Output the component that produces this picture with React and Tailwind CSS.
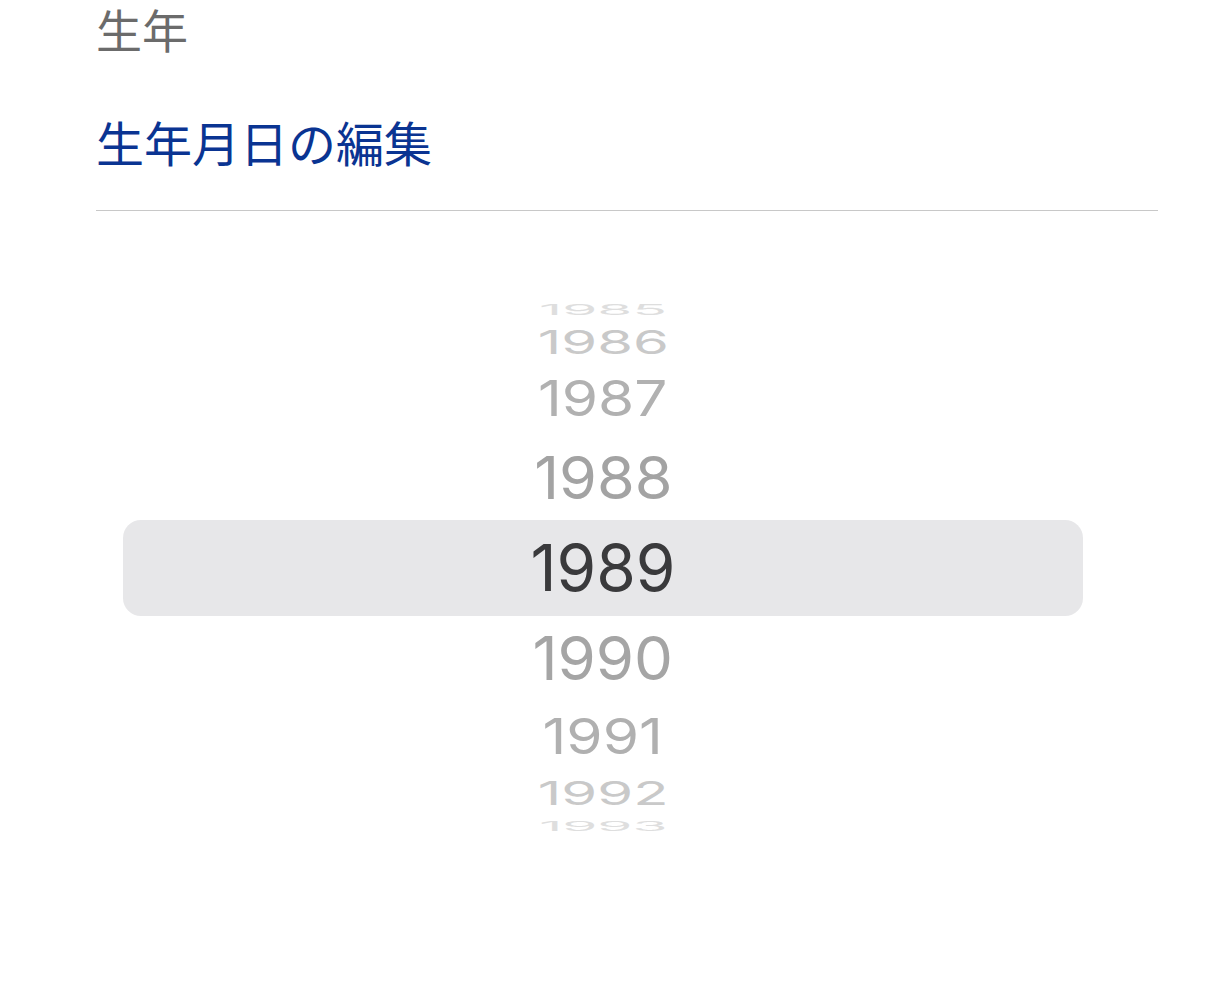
import React from 'react';

const rows = [
  { year: '1985', h: 'h-[32px]', text: 'text-[#dedede] scale-y-[0.24] scale-x-[0.9]' },
  { year: '1986', h: 'h-[35px]', text: 'text-[#c9c9c9] scale-y-[0.52] scale-x-[0.92]' },
  { year: '1987', h: 'h-[76px]', text: 'text-[#b1b1b1] scale-y-[0.78] scale-x-[0.93]' },
  { year: '1988', h: 'h-[84px]', text: 'text-[#a3a3a3] scale-y-[0.93] scale-x-[0.97]' },
];

const rowsBelow = [
  { year: '1990', h: 'h-[84px]', text: 'text-[#a5a5a5] scale-y-[0.96] scale-x-[0.98]' },
  { year: '1991', h: 'h-[72px]', text: 'text-[#b0b0b0] scale-y-[0.79] scale-x-[0.93]' },
  { year: '1992', h: 'h-[43px]', text: 'text-[#c9c9c9] scale-y-[0.52] scale-x-[0.92]' },
  { year: '1993', h: 'h-[22px]', text: 'text-[#dedede] scale-y-[0.2] scale-x-[0.9]' },
];

const Row = ({ year, h, text }) => (
  <div className={`${h} flex items-center justify-center`}>
    <span className={`block leading-none text-[63px] ${text}`}>{year}</span>
  </div>
);

export default function App() {
  return (
    <div className="min-h-[999px] bg-white" style={{ fontFamily: 'Inter, "Noto Sans CJK JP", sans-serif' }}>
      {/* Header */}
      <div className="pl-[96px] pr-[48px]">
        <div className="pt-[4px] text-[46px] leading-[48px] text-[#6b6b6b]" style={{ fontFamily: '"Noto Sans CJK JP", sans-serif' }}>
          生年
        </div>
        <div className="mt-[61px] text-[48px] leading-[56px] text-[#0a3492]" style={{ fontFamily: '"Noto Sans CJK JP", sans-serif' }}>
          生年月日の編集
        </div>
        <div className="mt-[41px] h-px bg-[#c8c8c8]"></div>
      </div>

      {/* Year picker */}
      <div className="mt-[82px] flex flex-col">
        {rows.map((r) => (
          <Row key={r.year} {...r} />
        ))}
        <div className="mx-[123px] h-[96px] rounded-[18px] bg-[#e7e7e9] flex items-center justify-center">
          <span className="block leading-none text-[64px] text-[#3a3a3c]">1989</span>
        </div>
        {rowsBelow.map((r) => (
          <Row key={r.year} {...r} />
        ))}
      </div>
    </div>
  );
}
